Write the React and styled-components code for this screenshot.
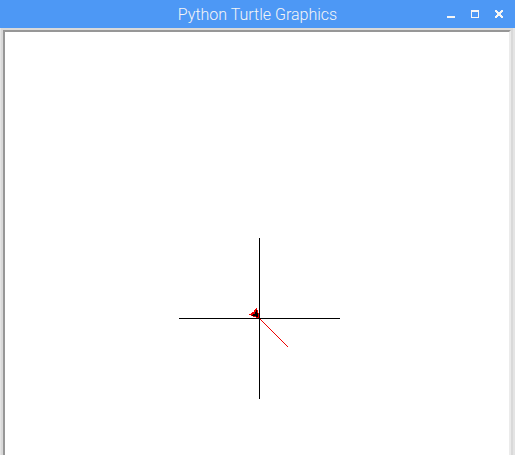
import React from "react";
import styled, { createGlobalStyle } from "styled-components";

const GlobalStyle = createGlobalStyle`
  * { box-sizing: border-box; }
  body { margin: 0; background: #d9d9d9; }
`;

const Window = styled.main`
  display: flex;
  flex-direction: column;
  min-height: 100vh;
  background: #d9d9d9;
`;

const TitleBar = styled.header`
  display: grid;
  grid-template-columns: 1fr auto 1fr;
  align-items: center;
  height: 28px;
  padding: 0 4px;
  background: #4d98f5;
`;

const Title = styled.h1`
  grid-column: 2;
  margin: 0;
  padding-top: 2px;
  color: #f5f5f5;
  font: 300 16px/26px Roboto, sans-serif;
  white-space: nowrap;
`;

const Controls = styled.div`
  display: flex;
  justify-content: flex-end;
`;

const ControlButton = styled.button`
  display: flex;
  align-items: center;
  justify-content: center;
  width: 24px;
  height: 28px;
  padding: 0;
  border: 0;
  background: transparent;
  color: #f5f5f5;
`;

const Frame = styled.section`
  display: flex;
  flex: 1;
  padding: 2px 2px 0 2px;
  border-left: 1px solid #e4e4e4;
  border-right: 2px solid #e4e4e4;
  background: #d9d9d9;
`;

const Canvas = styled.div`
  display: flex;
  flex: 1;
  justify-content: center;
  align-items: flex-start;
  padding: 206px 0 0 5px;
  border-top: 2px solid #979797;
  border-left: 2px solid #979797;
  border-right: 2px solid #ebebeb;
  background: #ffffff;
`;

const Drawing = styled.svg`
  display: block;
  flex: none;
`;

const glyphs = {
  Minimize: "M0 6h8v2H0z",
  Maximize: "M0 0h8v8H0zM1 2v5h6V2z",
  Close: "M0 0h2v1h1v1h2V1h1V0h2v2H7v1H6v2h1v1h1v2H6V7H5V6H3v1H2v1H0V6h1V5h1V3H1V2H0z",
};

function Control({ name }) {
  return (
    <ControlButton type="button" aria-label={name}>
      <svg width="8" height="8" viewBox="0 0 8 8" shapeRendering="crispEdges" aria-hidden="true">
        <path d={glyphs[name]} fill="currentColor" fillRule="evenodd" />
      </svg>
    </ControlButton>
  );
}

export default function App() {
  return (
    <>
      <GlobalStyle />
      <Window>
        <TitleBar>
          <Title>Python Turtle Graphics</Title>
          <Controls>
            <Control name="Minimize" />
            <Control name="Maximize" />
            <Control name="Close" />
          </Controls>
        </TitleBar>
        <Frame>
          <Canvas>
            <Drawing width="161" height="161" viewBox="0 0 161 161" shapeRendering="crispEdges" role="img" aria-label="Turtle drawing">
              <path d="M80 80L109 109" stroke="#f00000" strokeWidth="1" fill="none" />
              <path d="M77 70h1v2h1v3h1v5h-3v-1h-3v-1h-2v-1h-2v-1h2v-1h1v-1h2v-2h1v-1h1z" fill="#f00000" />
              <path d="M77 72h1v3h1v4h-2v-1h-4v-1h1v-1h2v-2h1z" fill="#000000" />
              <path d="M80 0h1v161h-1zM0 80h161v1H0z" fill="#000000" />
            </Drawing>
          </Canvas>
        </Frame>
      </Window>
    </>
  );
}
